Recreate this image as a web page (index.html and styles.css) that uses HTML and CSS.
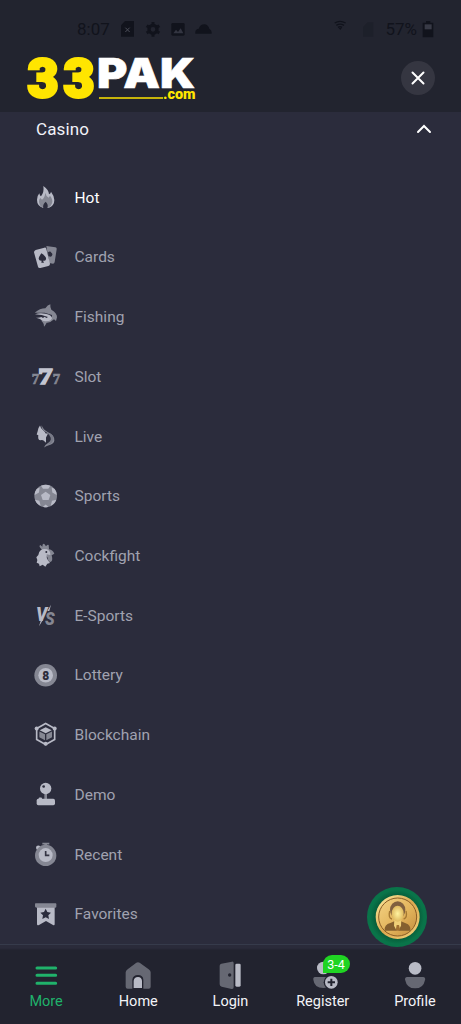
FILE: index.html
```html
<!DOCTYPE html>
<html lang="en">
<head>
<meta charset="utf-8">
<title>33PAK</title>
<link rel="stylesheet" href="styles.css">
</head>
<body>
<div class="app">
  <header class="header">
    <div class="status">
      <div class="status-group">
        <span>8:07</span>
        <svg width="94" height="20" viewBox="354 58 282 60"><path d="M375 64h27v47h-39V77z"/><path d="M376 84l13 13m0-13l-13 13" stroke="#4c4e59" stroke-width="3"/><circle cx="459" cy="89" r="12" fill="none" stroke="#11131c" stroke-width="10"/><path d="M459 67v9m0 26v9M440 78l8 5m22 12l8 5M440 100l8-5m22-12l8-5" stroke="#11131c" stroke-width="9"/><rect x="514" y="70" width="40" height="38" rx="4"/><path d="M520 101l8-11 6 7 8-11 8 15z" fill="#333541"/><path d="M586 102q-2-13 10-15 5-14 19-13 10 2 13 13 8 5 7 15z"/></svg>
      </div>
      <div class="status-group">
        <svg width="50" height="20" viewBox="310 58 150 60"><g fill="none" stroke="#11131c" stroke-width="4"><path d="M315 70q16-10 33 0M320 77q11-7 23 0M325 83q6-4 12 0"/></g><path d="M326 84h11l-5 7z"/><path d="M400 82l14-14h17v43h-31z" opacity=".25"/></svg>
        <span>57%</span>
        <svg class="battery" width="12" height="17" viewBox="574 62 36 51"><path d="M586 62h13v5h9v44h-32V67h10z"/><path d="M582 72h21v15h-21z" fill="#383a46"/></svg>
      </div>
    </div>
    <div class="brand">
      <svg class="logo" width="170" height="46" viewBox="27 55 170 46">
        <text class="logo-num" x="27.500" y="96.900" textLength="31" lengthAdjust="spacingAndGlyphs">3</text>
        <text class="logo-num" x="63.500" y="96.900" textLength="31" lengthAdjust="spacingAndGlyphs">3</text>
        <text class="logo-name" x="97" y="88" textLength="98" lengthAdjust="spacingAndGlyphs">PAK</text>
        <path d="M99 98h64" stroke="#ffe500" stroke-width="1.400"/>
        <text class="logo-tld" x="163" y="98.600" textLength="32.500" lengthAdjust="spacingAndGlyphs">.com</text>
      </svg>
      <button class="close" aria-label="Close"><svg width="14" height="14" viewBox="0 0 14 14"><path d="M1.500 1.500l11 11m0-11l-11 11"/></svg></button>
    </div>
  </header>

  <main class="menu">
    <div class="section"><span>Casino</span><svg width="16" height="10" viewBox="0 0 16 10"><path d="M2 8l6-6 6 6"/></svg></div>
    <ul class="list">
      <li class="row active"><svg viewBox="30 21 93 93"><path class="a" d="M70 33q17 12 17 25 6-3 6-8 10 13 10 25 0 17-16 23H68Q51 92 51 74q0-11 7-19 1 7 5 9 10-13 7-31z"/><path class="b" d="M76 53q2 11 10 15l4-6q10 12 6 23-3 10-11 13H68q-11-5-11-19 0-6 4-10l5 5q9-7 10-21z"/><path class="c" d="M77 80q9 9 5 19H70q-3-11 7-19z"/></svg><span>Hot</span></li>
      <li class="row"><svg viewBox="30 200 93 93"><path class="b" d="M79 212l27 4q5 1 4 6l-6 38q-1 5-5 5l-11-2z"/><path class="c" d="M84 231q7-5 10 1 7 4-1 12l-8-1z"/><path class="a" d="M47 224l26-7q5-1 6 4l11 44q0 5-5 7l-24 6q-6 1-7-4l-12-43q0-5 5-7z"/><path class="c" d="M64 234q16 10 14 18-2 6-9 4l3 6h-8l1-6q-8 1-9-6 0-5 8-16z"/></svg><span>Cards</span></li>
      <li class="row"><svg viewBox="30 19 93 93"><path class="b" d="M44 54q16-13 32-13 7-10 15-12-1 9 3 16 18 11 17 23l-3 11-6-5q-11 11-22 10-4 8-8 12 0-9-3-12l-5-6 18-2q15-4 14-15L74 54z"/><path class="a" d="M45 59q14-6 31-2 20 4 20 14-3 10-20 9-11 0-16-7l-12-4q10 1 16-2l5 3 5-4 5 4 5-3q-18-7-39-8z"/></svg><span>Fishing</span></li>
      <li class="row"><svg viewBox="30 198.500 93 93"><g class="sevens"><text class="b" x="35" y="269" font-size="43" textLength="22" lengthAdjust="spacingAndGlyphs">7</text><text class="b" x="98" y="269" font-size="43" textLength="22" lengthAdjust="spacingAndGlyphs">7</text><text class="seven" x="55" y="267" font-size="71" textLength="43" lengthAdjust="spacingAndGlyphs">7</text></g></svg><span>Slot</span></li>
      <li class="row"><svg viewBox="30 17.600 93 93"><path class="b" d="M65 30q4 13 19 21 20 8 19 25-1 9-12 13-12 3-19 8 5-10 14-15 12-8 8-18-4-7-15-13-17-9-14-21z"/><path d="M82 54q21 1 18 18-3 14-16 16 10-10 8-20-1-8-10-14z" fill="#777986"/><path class="a" d="M60 31q-7 9-7 17l-3 10 5 2q-3 15 7 15 7-1 11 3l5 5V67l6-12-7 0q-1-5-7-9-8-5-10-15z"/></svg><span>Live</span></li>
      <li class="row"><svg viewBox="30 196.800 93 93"><circle class="b" cx="77" cy="242" r="34"/><path class="a" d="M77 229l14 10-5 15H68l-5-15zM63 211q14-6 28 0l-6 9H69zM45 230l5-9 9-5-2 15-13 8zM109 230l-5-9-9-5 2 15 13 8zM45 253l13 3 4 15q-12-5-17-18zM109 253l-13 3-4 15q12-5 17-18zM69 274l8-7 8 7q-8 3-16 0z"/></svg><span>Sports</span></li>
      <li class="row"><svg viewBox="30 16 93 93"><path class="b" d="M66 45q-12-10-5-14l6 5q0-11 6-8l5 7q4-7 8-4l1 13q12 2 16 13l-8 5q5 18-4 20-6 0-8-13z"/><path class="a" d="M62 47q7-6 19-3 11 5 10 17l-11-2q-1 12 4 18l6 8-8 2-6 9-8-6-9 5-2-8-7-3 2-8-3-8 6-7q0-8 7-14z"/><circle class="c" cx="79" cy="52" r="3"/></svg><span>Cockfight</span></li>
      <li class="row"><svg viewBox="30 195 93 93"><g class="versus"><text class="a" x="48" y="258" font-size="60" textLength="34" lengthAdjust="spacingAndGlyphs">V</text><text class="b" x="75" y="269" font-size="56" textLength="29" lengthAdjust="spacingAndGlyphs">S</text></g><path class="a" d="M57 274l7-23 5 3zM82 228l11-19-5 19z"/></svg><span>E-Sports</span></li>
      <li class="row"><svg viewBox="30 14.300 93 93"><circle class="b" cx="77" cy="60" r="34"/><circle class="a" cx="77" cy="60" r="22"/><text class="eight" x="77" y="73">8</text></svg><span>Lottery</span></li>
      <li class="row"><svg viewBox="30 193.500 93 93"><path d="M77 207l27 15v33l-27 15-27-15v-33z" fill="none" stroke="#b8bac6" stroke-width="5"/><circle class="a" cx="77" cy="268" r="6"/><circle class="a" cx="50" cy="222" r="6"/><circle class="a" cx="104" cy="222" r="6"/><path class="a" d="M77 218l18 9-18 9-18-9z"/><path class="b" d="M58 231l17 8v18l-17-9zM79 239l17-8v17l-17 9z"/></svg><span>Blockchain</span></li>
      <li class="row"><svg viewBox="30 12.600 93 93"><path class="b" d="M73 54h8v20h-8z"/><circle class="a" cx="77" cy="41" r="17"/><circle class="c" cx="71" cy="35" r="4"/><rect class="a" x="50" y="72" width="55" height="19" rx="5"/><rect class="a" x="56" y="68" width="10" height="8" rx="3"/></svg><span>Demo</span></li>
      <li class="row"><svg viewBox="30 191.700 93 93"><path class="b" d="M67 203h21v5h-7v8h-8v-8h-6z"/><circle class="a" cx="55" cy="218" r="7"/><circle class="b" cx="77" cy="241" r="32"/><circle class="a" cx="77" cy="240" r="21"/><path d="M77 228v13h11" fill="none" stroke="#343544" stroke-width="5"/></svg><span>Recent</span></li>
      <li class="row"><svg viewBox="30 25.900 93 93"><path class="a" d="M51 47h53v54q0 6-5 3l-21-12-21 12q-6 3-6-3z"/><path class="b" d="M46 39h61q2 0 2 3v7q0 3-4 3H50q-5 0-5-4v-6z"/><path class="c" d="M77 55l5 10 11 2-8 8 2 11-10-5-10 5 2-11-8-8 11-2z"/></svg><span>Favorites</span></li>
    </ul>
  </main>

  <nav class="nav">
    <a class="tab current"><svg viewBox="90 57 96 96"><path d="M111 84h56M111 106h56M111 130h56" stroke="#20b26b" stroke-width="9" stroke-linecap="round"/></svg><span>More</span></a>
    <a class="tab"><svg viewBox="367 57 96 96"><path class="d" d="M410 68q5-3 10 0l27 20q6 4 6 9v43q0 6-6 6h-63q-6 0-6-6V97q0-5 6-9z"/><path d="M398 147v-28q2-14 17-14t16 14v28z" fill="#22232f"/><path class="e" d="M402 144v-21q1-12 13-12 11 0 12 12v21z"/></svg><span>Home</span></a>
    <a class="tab"><svg viewBox="643 57 96 96"><path class="d" d="M665 71l32-6q5-1 5 5v71q0 7-6 6l-30-7q-6-1-6-7V77q0-5 5-6z"/><circle cx="690" cy="105" r="5" fill="#22232f"/><rect class="e" x="707" y="71" width="16" height="69" rx="4"/></svg><span>Login</span></a>
    <a class="tab"><svg viewBox="230 57 96 96"><circle class="e" cx="279" cy="84" r="19"/><path class="d" d="M254 111h49q7 0 6 8-5 25-30 25-27 0-30-25-1-8 5-8z"/><circle cx="303" cy="127" r="23" fill="#22232f"/><circle class="e" cx="303" cy="127" r="19"/><path d="M303 116v22M292 127h22" stroke="#22232f" stroke-width="6"/></svg><span>Register</span><b class="badge">3-4</b></a>
    <a class="tab"><svg viewBox="506.700 57 96 96"><circle class="e" cx="555" cy="85" r="19"/><path class="d" d="M531 111h48q7 0 6 8-5 26-30 26t-30-26q-1-8 6-8z"/></svg><span>Profile</span></a>
  </nav>

  <button class="support" aria-label="Support">
    <svg width="60" height="60" viewBox="50 37 180 180">
      <defs><linearGradient id="gold" x1="0" y1="0" x2="1" y2="1"><stop offset="0" stop-color="#fff0a5"/><stop offset=".5" stop-color="#dba84f"/><stop offset="1" stop-color="#f6d57d"/></linearGradient><linearGradient id="plate" x1="0" y1="0" x2="1" y2="1"><stop offset="0" stop-color="#f4d383"/><stop offset=".55" stop-color="#e2b45c"/><stop offset="1" stop-color="#c58d3c"/></linearGradient><radialGradient id="face"><stop offset="0" stop-color="#fff3a0"/><stop offset="1" stop-color="#dfb95f"/></radialGradient><radialGradient id="green"><stop offset=".7" stop-color="#075b39"/><stop offset=".9" stop-color="#097449"/></radialGradient></defs>
      <circle cx="140" cy="127" r="90" fill="url(#green)"/><circle cx="142" cy="127" r="66" fill="url(#gold)"/><circle cx="142" cy="127" r="57" fill="url(#plate)" stroke="#8a5c26" stroke-width="3"/>
      <path d="M103 168q-2-18 17-23l12-5h20l14 6q16 5 14 22z" fill="#85602f"/><path d="M132 136h21l-1 17-8 15h-5l-8-15z" fill="#f0d078"/><path d="M139 151h7l4 17h-14z" fill="#a07031"/>
      <ellipse cx="142" cy="106" rx="23" ry="26" fill="#80603f"/><ellipse cx="142" cy="117" rx="18" ry="24" fill="url(#face)"/><path d="M118 109q-5 22 7 24M167 109q5 20-7 24" fill="none" stroke="#a47832" stroke-width="4"/>
    </svg>
  </button>
</div>
</body>
</html>
```

FILE: styles.css
```css
* { box-sizing: border-box; }
body { margin: 0; background: #2b2c3c; font-family: Roboto, "Liberation Sans", sans-serif; }
.app { position: relative; width: 461px; height: 1024px; display: flex; flex-direction: column; overflow: hidden; }
button { border: 0; padding: 0; }
svg { display: block; flex: none; }

.header { height: 112px; background: #22242f; flex: none; }
.status { display: flex; justify-content: space-between; padding: 19px 27px 0 77px; height: 55px; color: #11131c; font-size: 17px; line-height: 20px; }
.status svg { fill: #11131c; }
.status-group { display: flex; gap: 8px; height: 20px; align-items: center; }
.status-group + .status-group { gap: 2px; }
.status-group .battery { margin-left: 3px; }
.brand { display: flex; justify-content: space-between; padding: 0 26px 0 27px; }
.logo { overflow: visible; }
.logo text { font-family: Roboto, sans-serif; font-weight: 900; }
.logo .logo-num { font-size: 53px; fill: #ffe500; stroke: #ffe500; stroke-width: 3px; }
.logo .logo-name { font-family: Inter, sans-serif; font-size: 41px; fill: #fff; stroke: #fff; stroke-width: .6px; }
.logo .logo-tld { font-size: 14px; fill: #ffe500; }
.close { width: 34px; height: 34px; margin-top: 6px; border-radius: 50%; background: #353641; display: grid; place-items: center; }
.close path, .section path { fill: none; stroke: #fff; stroke-width: 2; stroke-linecap: round; }

.menu { flex: 1; min-height: 0; }
.section { height: 34px; padding: 0 29px 0 36px; display: flex; align-items: center; justify-content: space-between; color: #f1f2f8; font-size: 17px; letter-spacing: .15px; }
.list { list-style: none; margin: 0; padding: 21.600px 0 0 30px; }
.row { height: 59.720px; display: flex; align-items: center; gap: 13.500px; font-size: 15.500px; color: #a0a2b0; }
.row > svg { width: 31px; height: 31px; overflow: visible; }
.row > span { padding-top: .5px; }
.row.active { color: #fff; }
.a { fill: #b8bac6; }
.b { fill: #858793; }
.c { fill: #2b2c3c; }
.sevens text { font-family: "Liberation Serif", serif; font-weight: 700; }
.sevens .b { stroke: #858793; stroke-width: 2px; }
.sevens .seven { fill: #c3c5d1; stroke: #c3c5d1; stroke-width: 5px; }
.versus text { font-family: Roboto, sans-serif; font-weight: 900; font-style: italic; }
.eight { font: 900 36px Roboto, sans-serif; fill: #2b2c3c; text-anchor: middle; }

.nav { height: 80px; flex: none; border-top: 1px solid #363b4b; background: linear-gradient(#2a2b3a 0 3px, #22232f 5px); display: grid; grid-template-columns: repeat(5, 1fr); padding-top: 14px; }
.tab { position: relative; display: flex; flex-direction: column; align-items: center; color: #f3f4f8; font-size: 14.500px; line-height: 22px; }
.tab svg { width: 32px; height: 32px; }
.tab.current { color: #20b26b; }
.d { fill: #666873; }
.e { fill: #b9bbc6; }
.badge { position: absolute; left: 46px; top: -4px; width: 27px; height: 18px; border-radius: 9px 9px 9px 0; background: #20d423; color: #fff; font-size: 12.500px; font-weight: 400; line-height: 19px; text-align: center; }
.support { position: absolute; left: 367px; top: 887px; width: 60px; height: 60px; border-radius: 50%; background: none; }
```
